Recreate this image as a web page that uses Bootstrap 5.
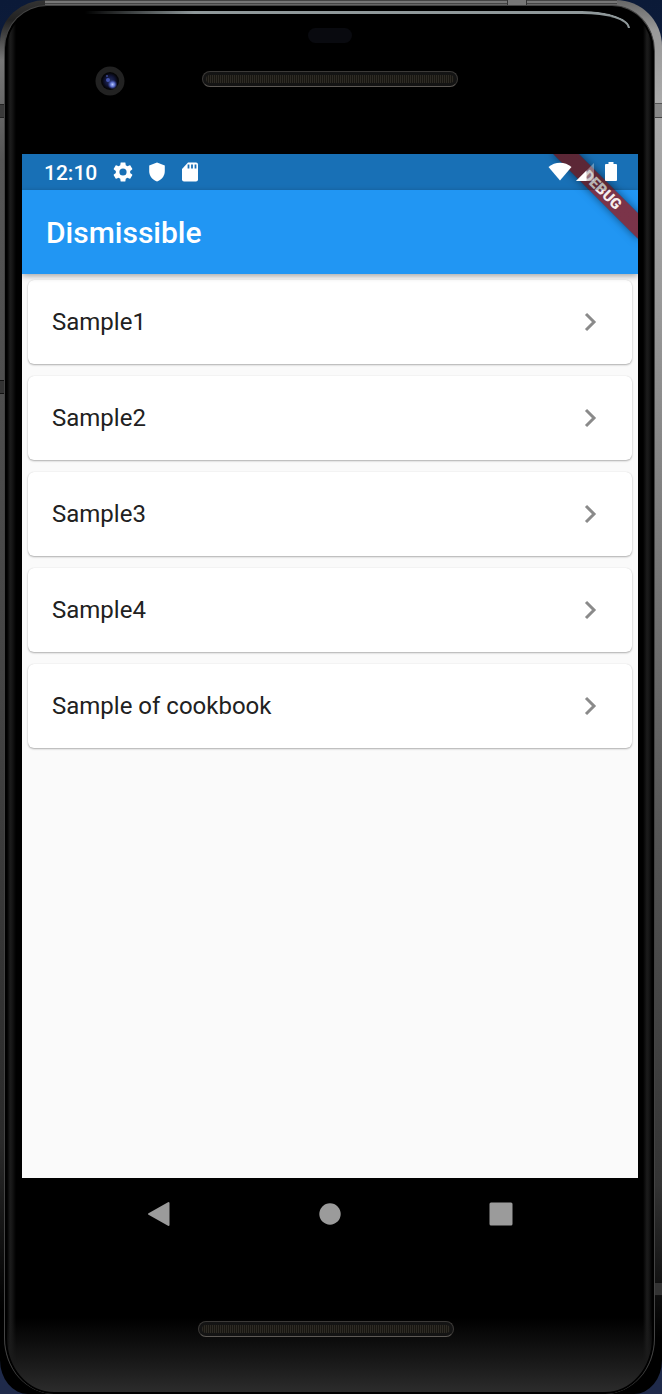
<!DOCTYPE html>
<html lang="en">
<head>
<meta charset="utf-8">
<meta name="viewport" content="width=device-width, initial-scale=1">
<title>Dismissible</title>
<link href="https://cdn.jsdelivr.net/npm/bootstrap@5.3.0/dist/css/bootstrap.min.css" rel="stylesheet">
<style>
  body { background: linear-gradient(#0b1a38, #16264a 30%, #1f2a4a); font-family: Roboto, "Noto Sans", sans-serif; }

  /* Metal frame with antenna seams; the right side catches more light */
  .frame {
    padding: 5px 7px 0 4px;
    border-radius: 46px 46px 28px 28px / 42px 46px 34px 34px;
    background:
      linear-gradient(#222 1px, #3a3a3a 1px 13px, #222 13px) 0 104px / 4px 14px no-repeat,
      linear-gradient(#111 1px, #333 1px 13px, #111 13px) 0 380px / 4px 14px no-repeat,
      linear-gradient(#555 1px, #888 1px 14px, #444 14px) 100% 103px / 7px 15px no-repeat,
      linear-gradient(#111 1px, #333 1px 13px, #111 13px) 100% 1282px / 7px 14px no-repeat,
      linear-gradient(90deg, #333 1px, #777 1px 19px, #333 19px) 507px 0 / 20px 5px no-repeat,
      linear-gradient(#444 1px, #777 1px 3px, #444 3px 4px, #666 4px) 50% 0 / calc(100% - 90px) 5px no-repeat,
      linear-gradient(#333, #222 20px, #777 60px, #555 160px, #444 50%, #2a2a2a 82%, #000 94%) 0 0 / 50% 100% no-repeat,
      linear-gradient(#666, #999 30px, #aaa 100px, #999 300px, #555 60%, #333 85%, #000 96%) 100% 0 / 50% 100% no-repeat;
  }
  .glass {
    border: 1px solid #444;
    border-bottom: 0;
    border-radius: 43px 43px 50px 50px / 43px 46px 56px 56px;
    padding: 0 16px 0 17px;
    box-shadow: inset 0 0 0 2px #000;
    background:
      linear-gradient(transparent calc(100% - 76px), #1a1a1a calc(100% - 30px), #2d2d2d 100%),
      linear-gradient(90deg, #000 2px, #1c1c1c 5px, #161616 7px, #000 11px calc(100% - 11px), #1c1c1c calc(100% - 7px), #161616 calc(100% - 5px), #000 calc(100% - 2px));
  }
  .glint {
    top: 5px; left: 80px; right: 24px; height: 17px;
    border-top: 3px solid #8f989a;
    border-right: 2px solid #8f989a;
    border-top-right-radius: 48px 17px;
    -webkit-mask: linear-gradient(90deg, transparent, #000 20%);
    mask: linear-gradient(90deg, transparent, #000 20%);
  }
  .forehead { height: 148px; padding-top: 22px; }
  .sensor { width: 44px; height: 15px; background: #090a0f; }
  .sensor-row { display: grid; grid-template-columns: 1fr auto 1fr; margin-top: 23px; }
  .grille {
    width: 256px; height: 16px;
    border: 1px solid #3c3a38; border-bottom: 1px solid #5d5955;
    background: repeating-linear-gradient(90deg, #2e2b25 0 1px, #181611 1px 2px) content-box, #141414;
    padding: 3px;
  }
  .screen { background: #2196f3; }
  .statusbar { height: 36px; background: rgba(0,0,0,.25); padding: 0 21px 0 22px; z-index: 3; }
  .clock { font-size: 21px; line-height: 34px; font-weight: 500; padding-top: 2px; }
  .appbar { height: 84px; background: #2196f3; padding: 2px 24px 0; box-shadow: 0 2px 6px rgba(0,0,0,.35); z-index: 1; }
  .appbar h1 { font-size: 30px; line-height: 36px; font-weight: 500; }
  .content { background: #fafafa; padding-top: 6px; }
  .tile {
    height: 84px; margin: 0 6px 12px; padding: 0 30px 0 24px;
    border-radius: 6px; background: #fff; color: #212121;
    font-size: 24px; line-height: 32px;
    box-shadow: 0 1px 2px rgba(0,0,0,.3), 0 0 1px rgba(0,0,0,.12);
  }
  .ribbon {
    top: 27px; right: -24px; width: 120px; height: 18px;
    transform: rotate(45deg); z-index: 2;
    background: linear-gradient(rgba(183,28,28,.63), rgba(183,28,28,.63)), rgba(0,0,0,.38);
    box-shadow: 0 0 9px rgba(0,0,0,.5);
    color: #f5eeee; font-size: 15px; line-height: 18px; font-weight: 900;
  }
  .battery { margin-left: 11px; }
  .navkeys { height: 72px; padding: 0 8.33%; }
  .chin { height: 144px; padding: 71px 8px 0 0; }
</style>
</head>
<body>
<div class="frame min-vh-100 d-flex flex-column overflow-hidden">
  <div class="glass position-relative flex-grow-1 d-flex flex-column">
    <div class="glint position-absolute"></div>
    <div class="forehead">
      <div class="sensor rounded-pill mx-auto"></div>
      <div class="sensor-row align-items-center">
        <div class="d-flex justify-content-center pe-1">
          <svg width="30" height="30" viewBox="0 0 30 30" aria-hidden="true">
            <defs>
              <radialGradient id="lens"><stop offset="0" stop-color="#26305e"/><stop offset=".6" stop-color="#12163a"/><stop offset="1" stop-color="#050509"/></radialGradient>
              <radialGradient id="spot"><stop offset="0" stop-color="#b4c6ff"/><stop offset=".5" stop-color="#5566c4"/><stop offset="1" stop-color="#2a3580" stop-opacity="0"/></radialGradient>
            </defs>
            <circle cx="15" cy="15" r="14.5" fill="#222"/>
            <circle cx="15" cy="15" r="9" fill="#060608"/>
            <circle cx="15" cy="15" r="8" fill="url(#lens)"/>
            <circle cx="17.500" cy="18.500" r="5" fill="url(#spot)"/>
            <circle cx="13" cy="14" r="2" fill="#4455b0"/>
            <circle cx="12" cy="10" r="1" fill="#3b4790"/>
          </svg>
        </div>
        <div class="grille rounded-pill mb-1"></div>
      </div>
    </div>

    <main class="screen flex-grow-1 d-flex flex-column position-relative overflow-hidden">
      <div class="statusbar d-flex align-items-center text-white position-relative">
        <span class="clock me-3">12:10</span>
        <svg width="20" height="20" viewBox="2 2 20 20" fill="#fff" aria-hidden="true"><path d="M19.140 12.940c.04-.3.06-.61.06-.94 0-.32-.02-.64-.07-.94l2.030-1.580c.18-.14.23-.41.12-.61l-1.920-3.320c-.12-.22-.37-.29-.59-.22l-2.390.96c-.5-.38-1.030-.7-1.620-.94l-.36-2.540c-.04-.24-.24-.41-.48-.41h-3.840c-.24 0-.43.17-.47.41l-.36 2.540c-.59.24-1.130.57-1.620.94l-2.390-.96c-.22-.08-.47 0-.59.22L2.740 8.870c-.12.21-.08.47.12.61l2.030 1.580c-.05.3-.09.63-.09.94s.02.64.07.94l-2.030 1.580c-.18.14-.23.41-.12.61l1.920 3.320c.12.22.37.29.59.22l2.390-.96c.5.38 1.030.7 1.620.94l.36 2.540c.05.24.24.41.48.41h3.840c.24 0 .44-.17.47-.41l.36-2.540c.59-.24 1.130-.56 1.620-.94l2.390.96c.22.08.47 0 .59-.22l1.920-3.320c.12-.22.07-.47-.12-.61zM12 15.600A3.600 3.600 0 1 1 12 8.400a3.600 3.600 0 0 1 0 7.200z"/></svg>
        <svg class="ms-3" width="16" height="20" viewBox="0 0 16 20" fill="#fff" aria-hidden="true"><path d="M8 .5 15.800 3.500V9c0 5-3 8.800-7.800 10.500C3.200 17.800.2 14 .2 9V3.500z"/></svg>
        <svg class="ms-3" width="18" height="20" viewBox="0 0 18 20" aria-hidden="true"><path d="M7 .5h8a2 2 0 0 1 2 2v15a2 2 0 0 1-2 2H3a2 2 0 0 1-2-2V7z" fill="#fff"/><path d="M7.500 2.500v4M11 2.500v4M14.500 2.500v4" stroke="#1a6fb5" stroke-width="1.800"/></svg>
        <svg class="ms-auto" width="24" height="20" viewBox="0 0 24 20" fill="#fff" aria-hidden="true"><path d="M.5 5C7-.7 17-.7 23.500 5L12 18.500z"/></svg>
        <svg class="ms-1" width="18" height="20" viewBox="0 0 18 20" aria-hidden="true"><path d="M18 1v18H0z" fill="#fff" fill-opacity=".35"/><path d="M10.500 8.500V19H0z" fill="#fff"/></svg>
        <svg class="battery" width="12" height="20" viewBox="0 0 12 20" fill="#fff" aria-hidden="true"><path d="M3.500 0h5v2H11a1 1 0 0 1 1 1v15a1 1 0 0 1-1 1H1a1 1 0 0 1-1-1V3a1 1 0 0 1 1-1h2.500z"/></svg>
      </div>
      <header class="appbar d-flex align-items-center text-white position-relative">
        <h1 class="m-0">Dismissible</h1>
      </header>
      <div class="ribbon position-absolute text-center">DEBUG</div>
      <div class="content flex-grow-1">
        <nav id="samples" aria-label="Samples"></nav>
      </div>
    </main>

    <div class="navkeys d-flex align-items-center">
      <button class="btn p-0 border-0 flex-fill w-100 lh-1" aria-label="Back"><svg width="24" height="26" viewBox="0 0 24 26" aria-hidden="true"><path d="M2 13 21.500 2v22z" fill="#9b9b9b" stroke="#9b9b9b" stroke-width="2" stroke-linejoin="round"/></svg></button>
      <button class="btn p-0 border-0 flex-fill w-100 lh-1" aria-label="Home"><svg width="22" height="22" viewBox="0 0 22 22" aria-hidden="true"><circle cx="11" cy="11" r="10.700" fill="#9b9b9b"/></svg></button>
      <button class="btn p-0 border-0 flex-fill w-100 lh-1" aria-label="Overview"><svg width="24" height="24" viewBox="0 0 24 24" aria-hidden="true"><rect x=".5" y=".5" width="23" height="23" rx="1.500" fill="#9b9b9b"/></svg></button>
    </div>
    <div class="chin"><div class="grille rounded-pill mx-auto"></div></div>
  </div>
</div>
<script src="https://cdn.jsdelivr.net/npm/bootstrap@5.3.0/dist/js/bootstrap.bundle.min.js"></script>
<script>
  const samples = ["Sample1", "Sample2", "Sample3", "Sample4", "Sample of cookbook"];
  document.getElementById("samples").innerHTML = samples.map(name => `
    <a href="#" class="tile d-flex align-items-center justify-content-between text-decoration-none">
      <span>${name}</span>
      <svg width="24" height="24" viewBox="0 0 24 24" fill="none" stroke="#8a8a8a" stroke-width="3" aria-hidden="true"><path d="m8 4 8 8-8 8"/></svg>
    </a>`).join("");
</script>
</body>
</html>
